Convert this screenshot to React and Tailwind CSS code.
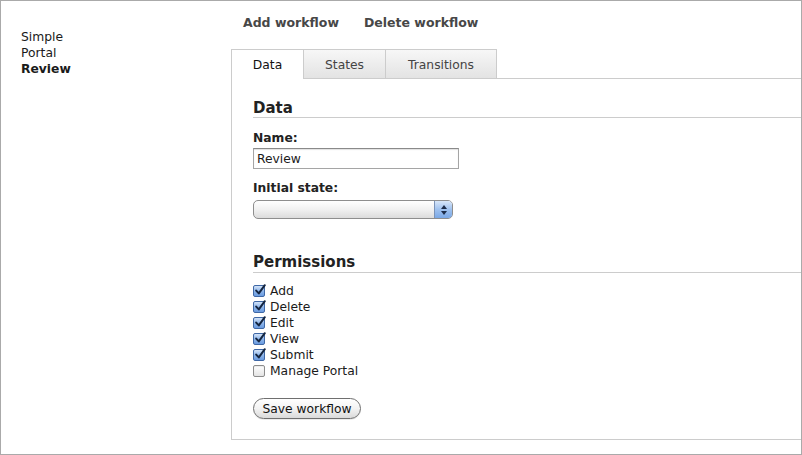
import React from "react";

function Check({ checked }) {
  if (!checked) {
    return (
      <span className="inline-block w-[12px] h-[12px] rounded-[2px] border border-[#8c8c8c] bg-gradient-to-b from-[#ffffff] to-[#e4e4e4] shadow-[inset_0_1px_1px_rgba(0,0,0,0.08)]" />
    );
  }
  return (
    <span className="relative inline-block w-[12px] h-[12px] rounded-[2px] border border-[#3f68a6] bg-gradient-to-b from-[#d3e3f8] via-[#8fb6ea] to-[#6a9be0]">
      <svg className="absolute left-[0px] top-[-2px]" width="13" height="12" viewBox="0 0 13 12">
        <path d="M2.2 6.6 L4.8 9.4 L10.8 1.2" fill="none" stroke="#142540" strokeWidth="2" strokeLinecap="round" strokeLinejoin="round" />
      </svg>
    </span>
  );
}

const perms = [
  ["Add", true],
  ["Delete", true],
  ["Edit", true],
  ["View", true],
  ["Submit", true],
  ["Manage Portal", false],
];

export default function App() {
  return (
    <div
      className="w-[802px] h-[455px] border border-[#aaaaaa] bg-white flex text-[12.3px] leading-[16px] text-[#1a1a1a] overflow-hidden"
      style={{ fontFamily: '"DejaVu Sans", Verdana, sans-serif' }}
    >
      {/* left column */}
      <div className="w-[230px] shrink-0 pl-[20px] pt-[28px]">
        <div>Simple</div>
        <div>Portal</div>
        <div className="font-bold">Review</div>
      </div>

      {/* main column */}
      <div className="flex-1 flex flex-col">
        <div className="flex gap-[25px] pl-[12px] pt-[14px] h-[48px] text-[12.5px] font-bold text-[#474747]">
          <span>Add workflow</span>
          <span>Delete workflow</span>
        </div>

        {/* tabs */}
        <div className="flex items-end h-[30px]">
          <div className="w-[73px] h-[30px] border-l border-t border-r border-[#cccccc] bg-white text-[#111] flex justify-center pt-[7px]">
            Data
          </div>
          <div className="w-[82px] h-[30px] border-t border-r border-b border-[#cccccc] bg-gradient-to-b from-[#f7f7f7] to-[#e3e3e3] text-[#444] flex justify-center pt-[7px]">
            States
          </div>
          <div className="w-[111px] h-[30px] border-t border-r border-b border-[#cccccc] bg-gradient-to-b from-[#f7f7f7] to-[#e3e3e3] text-[#444] flex justify-center pt-[7px]">
            Transitions
          </div>
          <div className="flex-1 border-b border-[#cccccc]" />
        </div>

        {/* panel */}
        <div className="h-[361px] border-l border-b border-[#cccccc] flex flex-col pl-[21px] pt-[20px]">
          <div className="text-[15px] leading-[18px] font-bold text-[#222] border-b border-[#cccccc] h-[19px]">
            Data
          </div>
          <div className="mt-[12px] font-bold text-[#222]">Name:</div>
          <div className="mt-[2px] w-[206px] h-[21px] border border-[#a5a5a5] border-t-[#8a8a8a] bg-white pl-[3px] pt-[1px] flex items-center shadow-[inset_0_1px_1px_rgba(0,0,0,0.12)]">
            Review
          </div>
          <div className="mt-[11px] font-bold text-[#222]">Initial state:</div>
          <div className="mt-[4px] w-[200px] h-[19px] rounded-[5px] border border-[#8e8e8e] flex overflow-hidden bg-gradient-to-b from-[#ffffff] via-[#f1f1f1] to-[#dcdcdc]">
            <div className="flex-1" />
            <div className="w-[18px] border-l border-[#7b93b8] bg-gradient-to-b from-[#d8e6f8] via-[#9fc1ee] to-[#7aa8e6] flex flex-col items-center justify-center gap-[2px]">
              <svg width="6" height="4" viewBox="0 0 6 4"><path d="M3 0 L6 4 L0 4 Z" fill="#1c2c48" /></svg>
              <svg width="6" height="4" viewBox="0 0 6 4"><path d="M0 0 L6 0 L3 4 Z" fill="#1c2c48" /></svg>
            </div>
          </div>

          <div className="mt-[34px] text-[15px] leading-[18px] font-bold text-[#222] border-b border-[#cccccc] h-[19px] box-content">
            Permissions
          </div>
          <div className="mt-[10px] flex flex-col">
            {perms.map(([label, checked]) => (
              <div key={label} className="flex items-center h-[16px]">
                <span className="w-[17px] flex items-center"><Check checked={checked} /></span>
                <span>{label}</span>
              </div>
            ))}
          </div>

          <div className="mt-[19px]">
            <div className="inline-flex items-center justify-center w-[108px] h-[21px] rounded-full border border-[#6f6f6f] bg-gradient-to-b from-[#ffffff] via-[#f3f3f3] to-[#dadada] text-[#111] shadow-[0_1px_0_rgba(0,0,0,0.08)]">
              Save workflow
            </div>
          </div>
        </div>
      </div>
    </div>
  );
}
